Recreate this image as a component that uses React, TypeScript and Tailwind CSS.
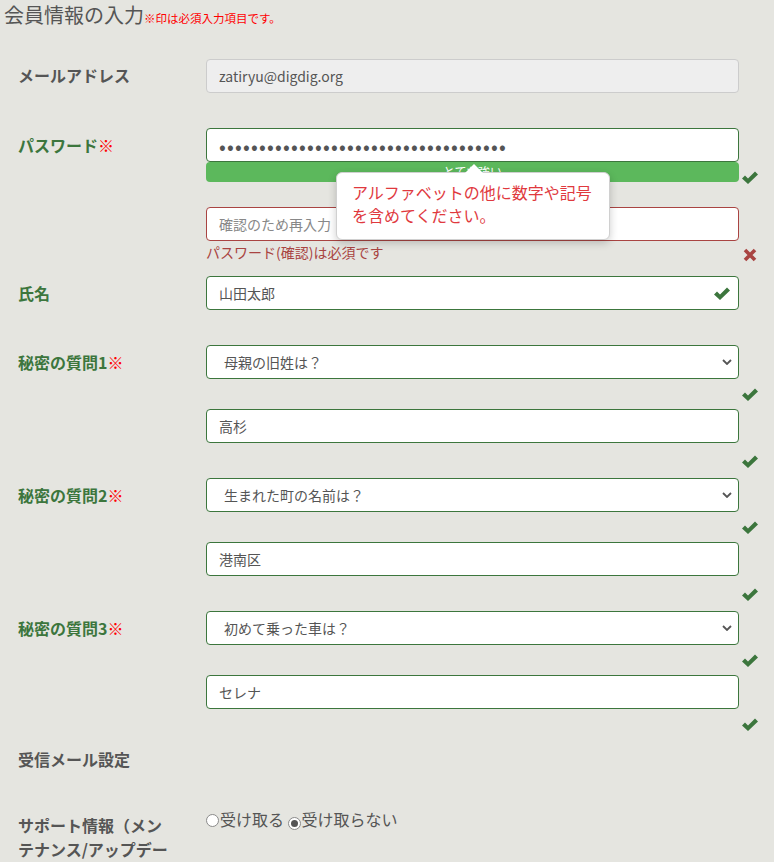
import type { ReactNode } from "react";

const FONT = { fontFamily: '"Noto Sans CJK JP", "Open Sans", sans-serif' };

const Check = ({ className = "" }: { className?: string }) => (
  <svg width="16" height="14" viewBox="0 0 16 14" className={className}>
    <polygon points="0,8.5 3,5.5 6,8.5 13,1.5 16,4.5 6,14" fill="#3c763d" />
  </svg>
);

const Cross = () => (
  <svg width="14" height="14" viewBox="0 0 14 14">
    <path d="M2 2 L12 12 M12 2 L2 12" stroke="#a94442" strokeWidth="3.6" />
  </svg>
);

const Chevron = () => (
  <svg width="10" height="6" viewBox="0 0 10 6">
    <polyline points="1,1 5,5 9,1" fill="none" stroke="#555" strokeWidth="1.8" />
  </svg>
);

const Label = ({ children, green, pt = "pt-[5px]" }: { children: ReactNode; green?: boolean; pt?: string }) => (
  <div
    className={`w-[206px] shrink-0 pl-[18px] pr-[30px] text-[16px] font-bold leading-[24px] ${pt} ${
      green ? "text-[#3c763d]" : "text-[#555]"
    }`}
  >
    {children}
  </div>
);

const Req = () => <span className="text-[#ff0000]">※</span>;

const inputBase =
  "h-[34px] w-[533px] rounded-[4px] border px-3 text-[14px] text-[#555] outline-none";

// feedback line under a field, icon sits to the right of the input column
const Feedback = ({ h }: { h: string }) => (
  <div className={`flex w-[556px] items-center justify-end pr-[4px] ${h}`}>
    <Check />
  </div>
);

const SelectBox = ({ value }: { value: string }) => (
  <div className={`${inputBase} flex items-center justify-between border-[#3c763d] bg-white pl-[17px] pr-[6px]`}>
    <span>{value}</span>
    <Chevron />
  </div>
);

const Question = ({ n, q, a, last }: { n: number; q: string; a: string; last?: boolean }) => (
  <div className="flex">
    <Label green>
      秘密の質問{n}
      <Req />
    </Label>
    <div className="flex flex-col">
      <SelectBox value={q} />
      <Feedback h="h-[30px]" />
      <input readOnly defaultValue={a} className={`${inputBase} border-[#3c763d] bg-white`} />
      <Feedback h={last ? "h-[30px]" : "h-[35px]"} />
    </div>
  </div>
);

const Radio = ({ checked }: { checked?: boolean }) => (
  <span className="mr-[1px] inline-flex size-[13px] items-center justify-center rounded-full border border-[#8a8a8a] bg-white align-[-1px]">
    {checked && <span className="size-[7px] rounded-full bg-[#555]" />}
  </span>
);

export default function App() {
  return (
    <div className="min-h-screen w-[774px] overflow-hidden bg-[#e5e5e0]" style={FONT}>
      <div className="flex h-[32px] items-baseline pl-[4px] pt-[1px]">
        <span className="text-[20px] leading-[28px] text-[#555]">会員情報の入力</span>
        <span className="text-[11.5px] text-[#ff0000]">※印は必須入力項目です。</span>
      </div>

      <div className="mt-[27px] flex flex-col">
        {/* email */}
        <div className="flex">
          <Label pt="pt-[4px]">メールアドレス</Label>
          <input
            readOnly
            defaultValue="zatiryu@digdig.org"
            className={`${inputBase} border-[#cccccc] bg-[#eeeeee]`}
          />
        </div>

        {/* password */}
        <div className="relative mt-[35px] flex">
          <Label green>
            パスワード
            <Req />
          </Label>
          <div className="flex flex-col">
            <input
              readOnly
              type="password"
              defaultValue={"x".repeat(36)}
              className={`${inputBase} border-[#3c763d] bg-white text-[20px] tracking-[1.2px]`}
            />
            <div className="flex w-[556px]">
              <div className="flex h-[20px] w-[533px] items-center justify-center rounded-[4px] bg-[#5cb85c] text-[12px] text-white">
                とても強い
              </div>
              <div className="flex flex-1 justify-end pr-[4px] pt-[8px]">
                <Check />
              </div>
            </div>
            <input
              readOnly
              placeholder="確認のため再入力"
              className={`${inputBase} mt-[23px] border-[#a94442] bg-white placeholder:text-[#888]`}
            />
            <div className="flex h-[35px] w-[556px] items-start justify-between">
              <span className="text-[14px] leading-[22px] text-[#a94442]">パスワード(確認)は必須です</span>
              <div className="pr-[5px] pt-[7px]">
                <Cross />
              </div>
            </div>
          </div>

          {/* tooltip */}
          <div className="absolute left-[336px] top-[44px] w-[274px] rounded-[6px] border border-[#d0d0d0] bg-white px-[15px] pb-[12px] pt-[8px] text-[16px] leading-[23px] text-[#e0393e] shadow-[0_3px_8px_rgba(0,0,0,0.2)]">
            <div className="absolute -top-[9px] left-[128px] size-0 border-x-[9px] border-b-[9px] border-x-transparent border-b-white" />
            アルファベットの他に数字や記号
            <br />
            を含めてください。
          </div>
        </div>

        {/* name */}
        <div className="flex">
          <Label green>氏名</Label>
          <div className={`${inputBase} flex items-center justify-between border-[#3c763d] bg-white pr-[8px]`}>
            <span>山田太郎</span>
            <Check />
          </div>
        </div>

        <div className="mt-[35px] flex flex-col">
          <Question n={1} q="母親の旧姓は？" a="高杉" />
          <Question n={2} q="生まれた町の名前は？" a="港南区" />
          <Question n={3} q="初めて乗った車は？" a="セレナ" last />
        </div>

        {/* mail settings */}
        <div className="mt-[8px] flex">
          <Label pt="pt-0">受信メール設定</Label>
        </div>

        <div className="mt-[36px] flex">
          <Label pt="pt-[6px]">サポート情報（メンテナンス/アップデート）</Label>
          <div className="text-[16px] leading-[24px] text-[#555]">
            <Radio />
            受け取る <Radio checked />
            受け取らない
          </div>
        </div>
      </div>
    </div>
  );
}
